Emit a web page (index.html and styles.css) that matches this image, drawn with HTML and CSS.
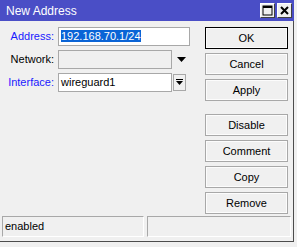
FILE: index.html
```html
<!DOCTYPE html>
<html lang="en">
<head>
    <meta charset="UTF-8">
    <title>New Address</title>
    <link rel="stylesheet" href="styles.css">
</head>
<body>
    <div class="window">
        <div class="titlebar">
            <span class="title">New Address</span>
            <div class="title-buttons">
                <span class="tbtn">
                    <svg width="11" height="11" viewBox="0 0 11 11"><rect x="1" y="1" width="9" height="9" fill="none" stroke="#000" stroke-width="1"/><rect x="1" y="1" width="9" height="2" fill="#000"/></svg>
                </span>
                <span class="tbtn">
                    <svg width="11" height="11" viewBox="0 0 11 11"><path d="M2 2 L9 9 M9 2 L2 9" stroke="#000" stroke-width="2"/></svg>
                </span>
            </div>
        </div>

        <div class="content">
            <div class="form">
                <label class="lbl active">Address:</label>
                <div class="field">
                    <div class="input wide"><span class="selected">192.168.70.1/24</span></div>
                </div>

                <label class="lbl">Network:</label>
                <div class="field">
                    <div class="input disabled"></div>
                    <span class="arrow">
                        <svg width="9" height="5" viewBox="0 0 9 5"><path d="M0 0 H9 L4.5 5 Z" fill="#000"/></svg>
                    </span>
                </div>

                <label class="lbl active">Interface:</label>
                <div class="field">
                    <div class="input">wireguard1</div>
                    <span class="drop">
                        <svg width="7" height="7" viewBox="0 0 7 7"><rect x="0" y="0" width="7" height="1" fill="#000"/><path d="M0 2 H7 L3.5 6 Z" fill="#000"/></svg>
                    </span>
                </div>
            </div>

            <div class="buttons">
                <button class="btn default">OK</button>
                <button class="btn">Cancel</button>
                <button class="btn">Apply</button>
                <div class="spacer"></div>
                <button class="btn">Disable</button>
                <button class="btn">Comment</button>
                <button class="btn">Copy</button>
                <button class="btn">Remove</button>
            </div>
        </div>

        <div class="statusbar">
            <div class="pane left">enabled</div>
            <div class="pane right"></div>
        </div>
    </div>
</body>
</html>
```

FILE: styles.css
```css
body {
    margin: 0;
    background-color: #f0f0f0;
    font-family: "Liberation Sans", Arial, sans-serif;
    font-size: 11px;
}

.window {
    width: 294px;
    height: 242px;
    background-color: #f0f0f0;
    border-right: 1px solid #4c4c4c;
    border-bottom: 1px solid #4c4c4c;
    box-sizing: border-box;
    display: flex;
    flex-direction: column;
}

.titlebar {
    height: 21px;
    background-color: #4a4ec6;
    display: flex;
    align-items: center;
    justify-content: space-between;
    padding: 0 2px 0 6px;
    margin-right: -1px;
}

.title {
    color: #fff;
    font-size: 12px;
}

.title-buttons {
    display: flex;
    gap: 2px;
}

.tbtn {
    width: 15px;
    height: 15px;
    box-sizing: border-box;
    background-color: #f0f0f0;
    border: 1px solid #fff;
    border-right-color: #404040;
    border-bottom-color: #404040;
    display: flex;
    align-items: center;
    justify-content: center;
}

.content {
    flex: 1;
    display: flex;
    justify-content: space-between;
    padding: 6px 5px 0 0;
}

.form {
    display: grid;
    grid-template-columns: 54px 132px;
    grid-auto-rows: 19px;
    column-gap: 4px;
    row-gap: 4px;
    align-content: start;
}

.lbl {
    text-align: right;
    line-height: 19px;
    color: #000;
}

.lbl.active {
    color: #1a1aff;
}

.field {
    display: flex;
    align-items: center;
    gap: 1px;
}

.input {
    width: 114px;
    height: 19px;
    box-sizing: border-box;
    border: 1px solid #a8a8a8;
    background-color: #fff;
    padding: 0 2px;
    line-height: 17px;
    white-space: nowrap;
}

.input.wide {
    width: 132px;
}

.input.disabled {
    background-color: #f0f0f0;
}

.selected {
    background-color: #0a64d6;
    color: #fff;
}

.arrow {
    width: 17px;
    display: flex;
    justify-content: center;
}

.drop {
    width: 13px;
    height: 17px;
    box-sizing: border-box;
    border: 1px solid #a8a8a8;
    display: flex;
    align-items: center;
    justify-content: center;
}

.buttons {
    display: flex;
    flex-direction: column;
    gap: 4px;
    width: 83px;
}

.spacer {
    height: 5px;
}

.btn {
    height: 22px;
    box-sizing: border-box;
    background-color: #f0f0f0;
    border: 1px solid #a8a8a8;
    box-shadow: inset 0 0 0 1px #fcfcfc;
    font-family: "Liberation Sans", Arial, sans-serif;
    font-size: 11px;
    color: #000;
    padding: 0;
}

.btn.default {
    border-color: #000;
}

.statusbar {
    display: flex;
    gap: 3px;
    padding: 0 2px 4px 2px;
}

.pane {
    height: 21px;
    box-sizing: border-box;
    border: 1px solid #a8a8a8;
    border-right-color: #fff;
    border-bottom-color: #fff;
    line-height: 19px;
    padding-left: 2px;
}

.pane.left {
    width: 142px;
}

.pane.right {
    flex: 1;
}
```
